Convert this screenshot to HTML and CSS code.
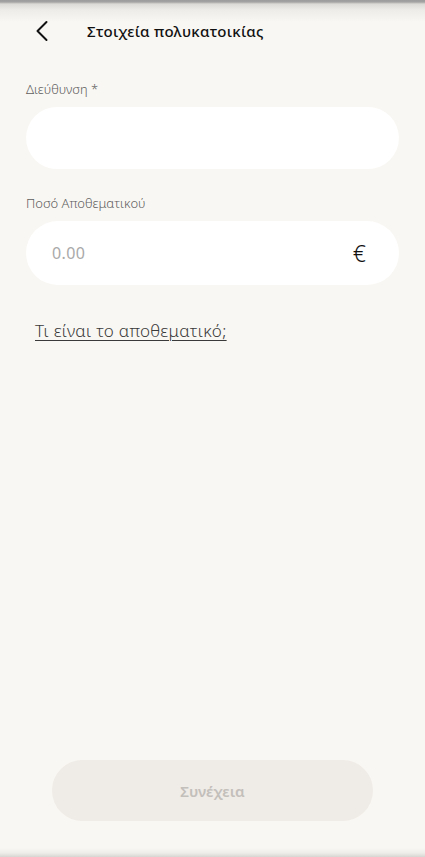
FILE: index.html
```html
<!DOCTYPE html>
<html lang="el">
<head>
<meta charset="utf-8">
<title>Στοιχεία πολυκατοικίας</title>
<link rel="stylesheet" href="styles.css">
</head>
<body>
<div class="page">
  <header class="header">
    <button class="back" aria-label="Πίσω">
      <svg width="14" height="22" viewBox="0 0 14 22"><path d="M11.5 2 L2.5 11 L11.5 20" fill="none" stroke="#111" stroke-width="2" stroke-linecap="round" stroke-linejoin="round"/></svg>
    </button>
    <h1 class="title">Στοιχεία πολυκατοικίας</h1>
  </header>
  <main class="content">
    <label class="label">Διεύθυνση *</label>
    <div class="field field-address"></div>
    <label class="label label-second">Ποσό Αποθεματικού</label>
    <div class="field field-amount">
      <span class="placeholder">0.00</span>
      <span class="euro">€</span>
    </div>
    <a class="link" href="#">Τι είναι το αποθεματικό;</a>
  </main>
  <footer class="footer">
    <button class="continue">Συνέχεια</button>
  </footer>
</div>
</body>
</html>
```
FILE: styles.css
```css
html, body {
  margin: 0;
  padding: 0;
  background: #f9f7f3;
}
body {
  font-family: "Noto Sans", "DejaVu Sans", sans-serif;
  color: #111;
}
.page {
  min-height: 857px;
  display: flex;
  flex-direction: column;
}
.header {
  height: 62px;
  display: flex;
  align-items: center;
  background: linear-gradient(#9c9c9c 0, #a3a3a3 2px, #dcdad6 4px, #eeece8 10px, #f9f7f3 22px);
}
.back {
  border: 0;
  background: none;
  padding: 0;
  margin-left: 34px;
  width: 16px;
  height: 22px;
  display: flex;
  align-items: center;
  justify-content: center;
}
.title {
  margin: 0 0 0 37px;
  font-size: 15px;
  font-weight: 500;
  letter-spacing: 0.3px;
  color: #111;
}
.content {
  padding: 19px 26px 0 26px;
  display: flex;
  flex-direction: column;
}
.label {
  font-size: 13px;
  line-height: 16px;
  font-weight: 300;
  color: #5e5e5e;
  margin-bottom: 10px;
}
.label-second {
  margin-top: 26px;
}
.field {
  background: #fff;
  border-radius: 32px;
  display: flex;
  align-items: center;
  padding: 0 33px 0 26px;
}
.field-address {
  height: 62px;
}
.field-amount {
  height: 64px;
  justify-content: space-between;
}
.placeholder {
  font-size: 16px;
  letter-spacing: 0.4px;
  color: #a9a9a9;
}
.euro {
  font-size: 23px;
  color: #111;
  font-family: "Noto Sans", sans-serif;
  font-weight: 300;
}
.link {
  margin: 35px 0 0 9px;
  font-size: 17px;
  line-height: 21px;
  font-weight: 300;
  letter-spacing: 0.3px;
  color: #3a3a3a;
  text-decoration: underline;
  text-underline-offset: 3px;
  text-decoration-thickness: 1px;
  align-self: flex-start;
}
.footer {
  margin-top: auto;
  padding: 0 0 36px 0;
  display: flex;
  justify-content: center;
  background: linear-gradient(to top, #d8d6d2 0, #efede9 4px, #f9f7f3 9px);
}
.continue {
  width: 321px;
  height: 61px;
  border: 0;
  border-radius: 31px;
  background: #efebe6;
  color: #c3bfbb;
  font-family: "Noto Sans", sans-serif;
  font-size: 15px;
  font-weight: 600;
}
```
